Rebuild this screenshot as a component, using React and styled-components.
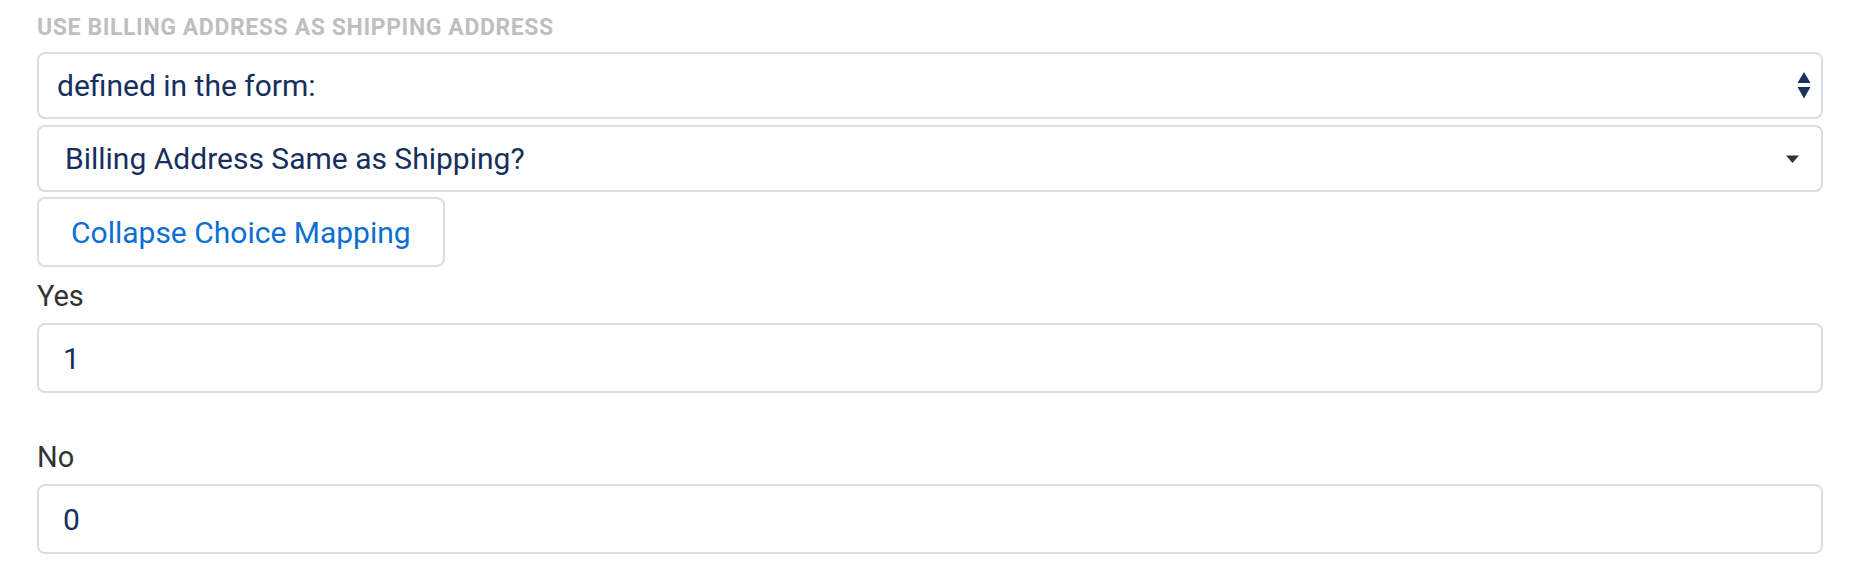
import React from "react";
import styled, { createGlobalStyle } from "styled-components";

const GlobalStyle = createGlobalStyle`
  html, body {
    margin: 0;
    padding: 0;
    background: #ffffff;
  }
  body {
    font-family: Roboto, "Noto Sans", "Liberation Sans", sans-serif;
  }
  * {
    box-sizing: border-box;
  }
`;

const UpDownIcon = () => (
  <svg width="14" height="27" viewBox="0 0 14 27" fill="#1b325e">
    <polygon points="7,0 13.5,11 0.5,11" />
    <polygon points="0.5,15 13.5,15 7,26.5" />
  </svg>
);

const CaretIcon = () => (
  <svg width="13" height="8" viewBox="0 0 13 8" fill="#333333">
    <polygon points="0,0.5 13,0.5 6.5,8" />
  </svg>
);

const App = () => {
  const choices = [
    { label: "Yes", value: "1" },
    { label: "No", value: "0" },
  ];

  return (
    <>
      <GlobalStyle />
      <Page>
        <SectionTitle>Use billing address as shipping address</SectionTitle>
        <Stack>
          <SelectBox $padLeft={18} $padRight={10} $height={67}>
            <SelectText>defined in the form:</SelectText>
            <UpDownIcon />
          </SelectBox>
          <SelectBox $padLeft={26} $padRight={22} $height={67}>
            <SelectText>Billing Address Same as Shipping?</SelectText>
            <CaretIcon />
          </SelectBox>
          <ToggleButton type="button">Collapse Choice Mapping</ToggleButton>
        </Stack>
        <Mapping>
          {choices.map((c) => (
            <Field key={c.label}>
              <FieldLabel>{c.label}</FieldLabel>
              <TextInput defaultValue={c.value} />
            </Field>
          ))}
        </Mapping>
      </Page>
    </>
  );
};

const Page = styled.div`
  width: 1862px;
  height: 582px;
  padding: 14px 39px 0 37px;
  overflow: hidden;
`;

const SectionTitle = styled.div`
  font-size: 23px;
  line-height: 27px;
  font-weight: 700;
  letter-spacing: 0.6px;
  text-transform: uppercase;
  color: #bfbfbf;
  margin-bottom: 11px;
`;

const Stack = styled.div`
  display: flex;
  flex-direction: column;
  align-items: flex-start;
  gap: 6px;
`;

const SelectBox = styled.div`
  width: 100%;
  height: ${(p) => p.$height}px;
  display: flex;
  align-items: center;
  justify-content: space-between;
  padding: 0 ${(p) => p.$padRight}px 0 ${(p) => p.$padLeft}px;
  border: 2px solid #d9dde8;
  border-radius: 8px;
  background: #fff;
  cursor: pointer;
`;

const SelectText = styled.span`
  font-size: 30px;
  color: #172f5c;
  white-space: nowrap;
`;

const ToggleButton = styled.button`
  height: 70px;
  margin-top: -1px;
  padding: 0 32px;
  border: 2px solid #d9dde8;
  border-radius: 8px;
  background: #fff;
  font-family: inherit;
  font-size: 30px;
  color: #0b6fd3;
  cursor: pointer;
`;

const Mapping = styled.div`
  margin-top: 12px;
  display: flex;
  flex-direction: column;
  gap: 47px;
`;

const Field = styled.div`
  display: flex;
  flex-direction: column;
  gap: 10px;
`;

const FieldLabel = styled.label`
  font-size: 29px;
  line-height: 34px;
  color: #333333;
`;

const TextInput = styled.input`
  width: 100%;
  height: 70px;
  padding: 0 24px;
  border: 2px solid #d9dde8;
  border-radius: 8px;
  font-family: inherit;
  font-size: 30px;
  color: #172f5c;
  outline: none;
`;

export default App;
